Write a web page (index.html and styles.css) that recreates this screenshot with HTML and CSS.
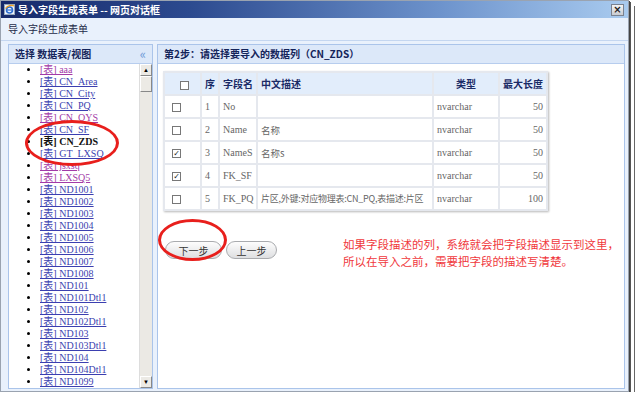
FILE: index.html
```html
<!DOCTYPE html>
<html lang="zh-CN">
<head>
    <meta charset="UTF-8">
    <title>导入字段生成表单 -- 网页对话框</title>
    <link rel="stylesheet" href="styles.css">
</head>
<body>

<div class="dialog">
    <!-- Title bar -->
    <div class="titlebar">
        <svg class="app-icon" width="11" height="11" viewBox="0 0 11 11">
            <rect x="0.5" y="0.5" width="10" height="10" fill="#eef4ff" stroke="#9ab"/>
            <circle cx="5.5" cy="6" r="3" fill="none" stroke="#2f6fd0" stroke-width="1.6"/>
            <path d="M3 6h5" stroke="#2f6fd0" stroke-width="1.2"/>
            <path d="M1.5 4.5C3 1.5 8 0.5 10 2" fill="none" stroke="#f0a020" stroke-width="1.2"/>
        </svg>
        <span class="title">导入字段生成表单 -- 网页对话框</span>
        <span class="close">×</span>
    </div>

    <div class="toolbar">导入字段生成表单</div>

    <div class="panes">
        <!-- Left: table list -->
        <div class="pane left-pane">
            <div class="pane-head">
                <span>选择 数据表/视图</span>
                <span class="collapse">«</span>
            </div>
            <div class="list-wrap">
                <ul class="table-list">
                    <li><a class="visited">[表] aaa</a></li>
                    <li><a>[表] CN_Area</a></li>
                    <li><a>[表] CN_City</a></li>
                    <li><a>[表] CN_PQ</a></li>
                    <li><a class="visited">[表] CN_OYS</a></li>
                    <li><a>[表] CN_SF</a></li>
                    <li><b class="current">[表] CN_ZDS</b></li>
                    <li><a>[表] GT_LXSQ</a></li>
                    <li><a class="visited">[表] jsxsq</a></li>
                    <li><a class="visited">[表] LXSQ5</a></li>
                    <li><a>[表] ND1001</a></li>
                    <li><a>[表] ND1002</a></li>
                    <li><a>[表] ND1003</a></li>
                    <li><a>[表] ND1004</a></li>
                    <li><a>[表] ND1005</a></li>
                    <li><a>[表] ND1006</a></li>
                    <li><a>[表] ND1007</a></li>
                    <li><a>[表] ND1008</a></li>
                    <li><a>[表] ND101</a></li>
                    <li><a>[表] ND101Dtl1</a></li>
                    <li><a>[表] ND102</a></li>
                    <li><a>[表] ND102Dtl1</a></li>
                    <li><a>[表] ND103</a></li>
                    <li><a>[表] ND103Dtl1</a></li>
                    <li><a>[表] ND104</a></li>
                    <li><a>[表] ND104Dtl1</a></li>
                    <li><a>[表] ND1099</a></li>
                </ul>
                <div class="scrollbar">
                    <div class="arrow up">▲</div>
                    <div class="thumb"></div>
                    <div class="track"></div>
                    <div class="arrow down">▼</div>
                </div>
            </div>
            <div class="mark mark-list"></div>
        </div>

        <!-- Right: column picker -->
        <div class="pane right-pane">
            <div class="pane-head">第2步：请选择要导入的数据列（CN_ZDS）</div>
            <div class="pane-body">
                <table class="fields">
                    <thead>
                        <tr>
                            <th class="c-chk"><span class="chk head-chk"></span></th>
                            <th class="c-no">序</th>
                            <th class="c-name">字段名</th>
                            <th class="c-desc">中文描述</th>
                            <th class="c-type">类型</th>
                            <th class="c-len">最大长度</th>
                        </tr>
                    </thead>
                    <tbody>
                        <tr>
                            <td><span class="chk"></span></td>
                            <td>1</td>
                            <td>No</td>
                            <td></td>
                            <td>nvarchar</td>
                            <td class="num">50</td>
                        </tr>
                        <tr>
                            <td><span class="chk"></span></td>
                            <td>2</td>
                            <td>Name</td>
                            <td class="cn">名称</td>
                            <td>nvarchar</td>
                            <td class="num">50</td>
                        </tr>
                        <tr>
                            <td><span class="chk on">✓</span></td>
                            <td>3</td>
                            <td>NameS</td>
                            <td class="cn">名称s</td>
                            <td>nvarchar</td>
                            <td class="num">50</td>
                        </tr>
                        <tr>
                            <td><span class="chk on">✓</span></td>
                            <td>4</td>
                            <td>FK_SF</td>
                            <td></td>
                            <td>nvarchar</td>
                            <td class="num">50</td>
                        </tr>
                        <tr>
                            <td><span class="chk"></span></td>
                            <td>5</td>
                            <td>FK_PQ</td>
                            <td class="cn long">片区,外键:对应物理表:CN_PQ,表描述:片区</td>
                            <td>nvarchar</td>
                            <td class="num">100</td>
                        </tr>
                    </tbody>
                </table>

                <div class="actions">
                    <button class="btn btn-next">下一步</button>
                    <button class="btn btn-prev">上一步</button>
                    <p class="note">如果字段描述的列，系统就会把字段描述显示到这里，<br>所以在导入之前，需要把字段的描述写清楚。</p>
                </div>
                <div class="mark mark-btn"></div>
            </div>
        </div>
    </div>
</div>

</body>
</html>
```

FILE: styles.css
```css
body {
    margin: 0;
    background-color: #fff;
    font-family: "Liberation Serif", "Noto Sans CJK SC", serif;
    font-size: 11px;
}

.dialog {
    width: 627px;
    height: 390px;
    border: 1px solid #9aa3b0;
    background-color: #e9f1fc;
    box-shadow: 1px 1px 0 #444, 2px 2px 0 #555, 5px 5px 0 #fff, 6px 6px 0 #666;
    display: flex;
    flex-direction: column;
    overflow: hidden;
}

/* title bar */
.titlebar {
    height: 17px;
    display: flex;
    align-items: center;
    padding: 0 3px;
    background: linear-gradient(to right, #16296a 0%, #2c4a8f 30%, #6d93cc 70%, #a9cbef 100%);
    flex-shrink: 0;
}

.app-icon {
    margin-right: 3px;
}

.title {
    color: #fff;
    font-family: "Noto Sans CJK SC", sans-serif;
    font-weight: bold;
    font-size: 10px;
    flex: 1;
}

.close {
    width: 11px;
    height: 10px;
    line-height: 9px;
    text-align: center;
    font-family: "DejaVu Sans", sans-serif;
    font-size: 10px;
    font-weight: bold;
    color: #222;
    background: linear-gradient(#f4f4f4, #c8ccd2);
    border: 1px solid #7a8290;
    margin-right: 1px;
}

.toolbar {
    height: 22px;
    line-height: 22px;
    padding-left: 7px;
    color: #1d2a48;
    font-family: "Noto Sans CJK SC", sans-serif;
    font-size: 10px;
    border-bottom: 1px solid #c4d6f0;
    flex-shrink: 0;
}

/* panes */
.panes {
    height: 345px;
    display: flex;
    gap: 4px;
    padding: 3px 3px 2px 7px;
}

.pane {
    border: 1px solid #aac4ea;
    background-color: #fff;
    display: flex;
    flex-direction: column;
    position: relative;
    overflow: hidden;
}

.left-pane {
    width: 143px;
}

.right-pane {
    flex: 1;
}

.pane-head {
    height: 18px;
    line-height: 18px;
    padding: 0 6px;
    background-color: #dce8f9;
    border-bottom: 1px solid #b7cdee;
    color: #14245a;
    font-family: "Noto Sans CJK SC", sans-serif;
    font-weight: bold;
    font-size: 10px;
    display: flex;
    justify-content: space-between;
    flex-shrink: 0;
}

.collapse {
    color: #6f9ad8;
    font-weight: normal;
    font-size: 13px;
}

/* table list */
.list-wrap {
    flex: 1;
    display: flex;
    min-height: 0;
    overflow: hidden;
}

.table-list {
    flex: 1;
    margin: 0;
    padding: 0 0 0 31px;
    line-height: 12px;
    font-size: 10px;
    overflow: hidden;
}

.table-list li {
    white-space: nowrap;
}

.table-list a {
    color: #3b3fb0;
    text-decoration: underline;
}

.table-list a.visited {
    color: #a23aa8;
}

.current {
    color: #111;
}

.scrollbar {
    width: 12px;
    background-color: #ebe9e4;
    display: flex;
    flex-direction: column;
    border-left: 1px solid #ddd;
}

.arrow {
    height: 10px;
    font-size: 6px;
    line-height: 10px;
    text-align: center;
    color: #000;
    background-color: #eceae5;
    border: 1px solid #fff;
    border-right-color: #888;
    border-bottom-color: #888;
}

.thumb {
    height: 14px;
    background-color: #eceae5;
    border: 1px solid #fff;
    border-right-color: #888;
    border-bottom-color: #888;
}

.track {
    flex: 1;
}

/* field table */
.pane-body {
    flex: 1;
    padding: 7px 5px;
    position: relative;
}

.fields {
    width: 383px;
    table-layout: fixed;
    border-collapse: collapse;
    border: 1px solid #a3a6ab;
    box-shadow: 1px 1px 2px #b8b8b8;
    color: #666;
}

.fields th,
.fields td {
    border: 2px solid #e5e8ee;
    height: 21px;
    padding: 0 3px;
    text-align: left;
    white-space: nowrap;
    overflow: hidden;
}

.fields th {
    background-color: #e2edfb;
    color: #1a2a66;
    font-family: "Noto Sans CJK SC", sans-serif;
    font-weight: bold;
    font-size: 10px;
}

.fields td {
    font-size: 10px;
}

.fields td.cn {
    font-family: "Noto Sans CJK SC", sans-serif;
    font-size: 9.5px;
}

.fields td.long {
    font-size: 9px;
    letter-spacing: -0.25px;
    padding: 0 1px 0 3px;
}

.c-chk { width: 29px; }
.c-no { width: 10px; }
.c-name { width: 30px; }
.c-desc { width: 168px; }
.c-type { width: 58px; }
.c-len { width: 40px; }

.fields th.c-type,
.fields th.c-len {
    text-align: center;
}

.fields td.num {
    text-align: right;
}

.chk {
    display: inline-block;
    width: 7px;
    height: 7px;
    border: 1px solid #777;
    background-color: #fff;
    margin-left: 4px;
    vertical-align: middle;
    font-family: "DejaVu Sans", sans-serif;
    font-size: 8px;
    line-height: 7px;
    color: #222;
    text-align: center;
    overflow: hidden;
}

.head-chk {
    margin-left: 12px;
}

/* buttons and note */
.actions {
    display: flex;
    align-items: center;
    margin-top: 19px;
    padding-left: 2px;
}

.btn {
    height: 18px;
    border: 1px solid #a9abae;
    border-radius: 9px;
    background: linear-gradient(#fdfdfd, #dedfe1);
    color: #333;
    font-family: "Noto Sans CJK SC", sans-serif;
    font-size: 10px;
    padding: 0;
    margin-right: 4px;
}

.btn-next { width: 57px; }
.btn-prev { width: 51px; }

.note {
    margin: 6px 0 0 62px;
    color: #f0383c;
    font-family: "Noto Sans CJK SC", sans-serif;
    font-size: 11.5px;
    line-height: 17px;
    white-space: nowrap;
}

/* red annotation rings */
.mark {
    position: absolute;
    border: 3px solid #e81f1c;
    border-radius: 50%;
}

.mark-list {
    left: 16px;
    top: 75px;
    width: 88px;
    height: 40px;
}

.mark-btn {
    left: 0;
    top: 155px;
    width: 63px;
    height: 36px;
}
```
